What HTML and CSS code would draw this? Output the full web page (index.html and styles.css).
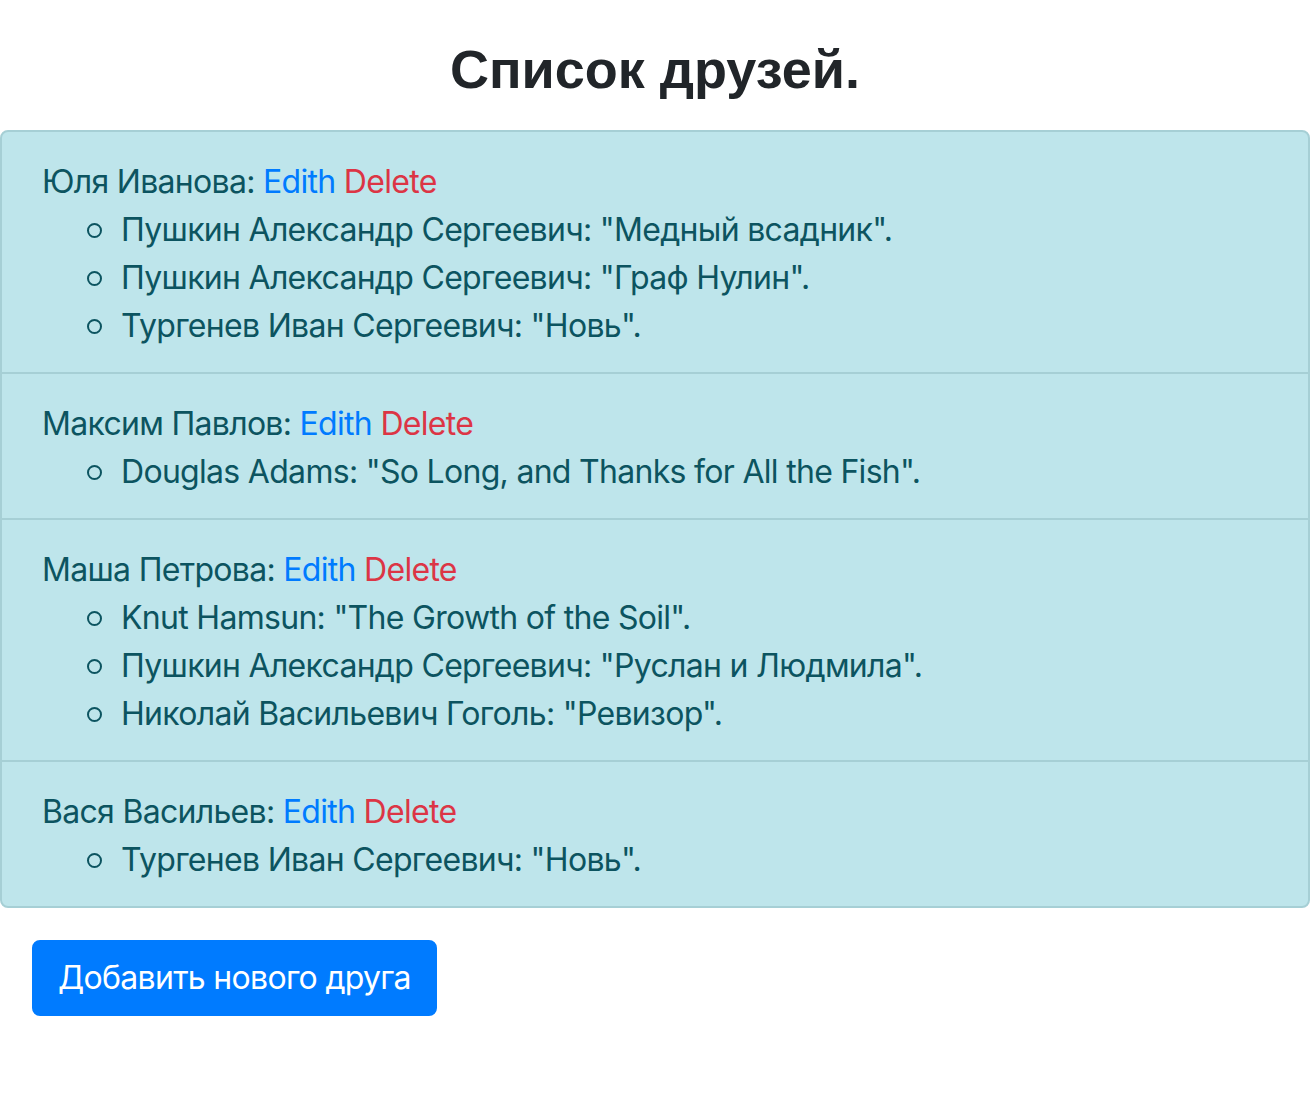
FILE: index.html
```html
<!DOCTYPE html>
<html lang="ru">
<head>
<meta charset="utf-8">
<title>Список друзей</title>
<link rel="stylesheet" href="styles.css">
</head>
<body>
<h1 class="title">Список друзей.</h1>
<ul class="list-group">
  <li class="item">
    <div class="name">Юля Иванова: <a class="edit" href="#">Edith</a> <a class="del" href="#">Delete</a></div>
    <ul class="books">
      <li>Пушкин Александр Сергеевич: "Медный всадник".</li>
      <li>Пушкин Александр Сергеевич: "Граф Нулин".</li>
      <li>Тургенев Иван Сергеевич: "Новь".</li>
    </ul>
  </li>
  <li class="item">
    <div class="name">Максим Павлов: <a class="edit" href="#">Edith</a> <a class="del" href="#">Delete</a></div>
    <ul class="books">
      <li>Douglas Adams: "So Long, and Thanks for All the Fish".</li>
    </ul>
  </li>
  <li class="item">
    <div class="name">Маша Петрова: <a class="edit" href="#">Edith</a> <a class="del" href="#">Delete</a></div>
    <ul class="books">
      <li>Knut Hamsun: "The Growth of the Soil".</li>
      <li>Пушкин Александр Сергеевич: "Руслан и Людмила".</li>
      <li>Николай Васильевич Гоголь: "Ревизор".</li>
    </ul>
  </li>
  <li class="item">
    <div class="name">Вася Васильев: <a class="edit" href="#">Edith</a> <a class="del" href="#">Delete</a></div>
    <ul class="books">
      <li>Тургенев Иван Сергеевич: "Новь".</li>
    </ul>
  </li>
</ul>
<button class="btn" type="button">Добавить нового друга</button>
</body>
</html>
```
FILE: styles.css
```css
* { box-sizing: border-box; }
body {
  margin: 0;
  font-family: "Inter", "Noto Sans", sans-serif;
  font-size: 32px;
  line-height: 48px;
  letter-spacing: -0.7px;
  color: #0c5460;
  background: #fff;
}
.title {
  margin: 37px 0 29px;
  text-align: center;
  font-family: "Liberation Sans", Arial, sans-serif;
  font-size: 54px;
  line-height: 64px;
  font-weight: 700;
  letter-spacing: 0;
  color: #212529;
}
.list-group {
  list-style: none;
  margin: 0;
  padding: 0;
  border: 2px solid #a6cfd5;
  border-radius: 8px;
  background: #bee5eb;
  overflow: hidden;
}
.item {
  padding: 26px 40px 22px;
  border-top: 2px solid #a6cfd5;
}
.item:first-child { border-top: none; }
.edit { color: #007bff; text-decoration: none; }
.del { color: #dc3545; text-decoration: none; }
.books {
  margin: 0;
  padding-left: 80px;
  list-style: none;
}
.books li::before {
  content: "";
  display: inline-block;
  width: 11px;
  height: 11px;
  margin-left: -35px;
  margin-right: 19px;
  border: 2px solid #0c5460;
  border-radius: 50%;
  vertical-align: 3px;
}
.btn {
  display: block;
  margin: 32px;
  padding: 12px 24px;
  border: 2px solid #007bff;
  border-radius: 8px;
  background: #007bff;
  color: #fff;
  font-family: "Inter", "Noto Sans", sans-serif;
  font-size: 32px;
  line-height: 48px;
  letter-spacing: -0.7px;
}
```
